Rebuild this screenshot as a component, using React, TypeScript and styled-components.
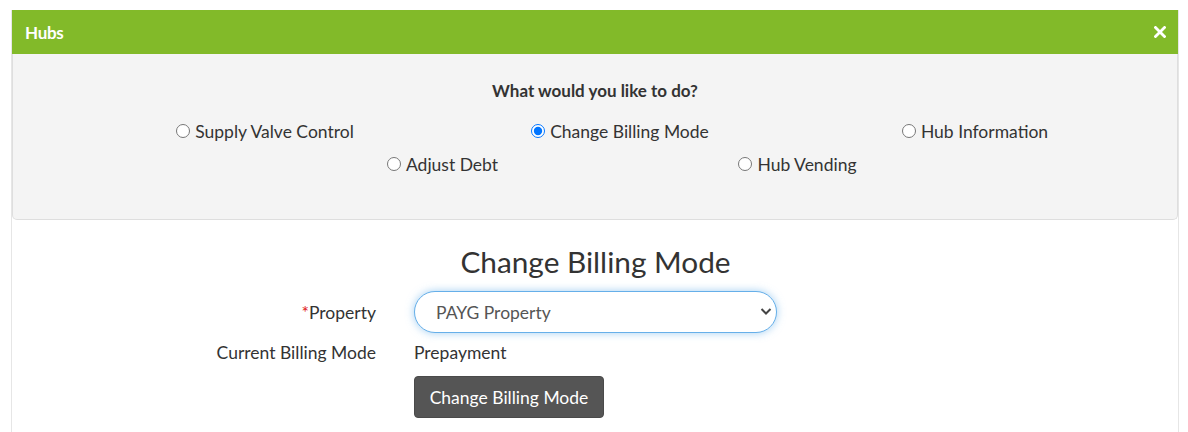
import React from "react";
import styled, { createGlobalStyle } from "styled-components";

const Global = createGlobalStyle`
  html, body { margin: 0; padding: 0; background: #ffffff; }
  body { font-family: Lato, "Open Sans", Arial, sans-serif; color: #333333; }
  * { box-sizing: border-box; }
`;

const Page = styled.div`
  padding: 10px 9px 0 11px;
  height: 432px;
  overflow: hidden;
`;

const Modal = styled.div`
  border-left: 1px solid #e6e6e6;
  border-right: 1px solid #e6e6e6;
  height: 422px;
  display: flex;
  flex-direction: column;
`;

const Header = styled.div`
  height: 44px;
  flex-shrink: 0;
  background: #82ba29;
  display: flex;
  align-items: center;
  justify-content: space-between;
  padding: 0 11px 0 13px;
`;

const Title = styled.h1`
  margin: 0;
  font-size: 17px;
  font-weight: 700;
  color: #ffffff;
  letter-spacing: -0.3px;
`;

const Close = styled.button`
  border: 0;
  background: transparent;
  padding: 0;
  width: 14px;
  height: 14px;
  display: flex;
  align-items: center;
  justify-content: center;
  cursor: pointer;
`;

const Chooser = styled.div`
  background: #f4f4f4;
  border: 1px solid #dedede;
  border-top: 0;
  border-radius: 0 0 5px 5px;
  height: 166px;
  flex-shrink: 0;
  padding-top: 27px;
`;

const Question = styled.div`
  text-align: center;
  font-size: 17px;
  font-weight: 700;
  line-height: 20px;
  color: #333;
  margin-bottom: 20px;
`;

const OptionRow = styled.div`
  display: flex;
  justify-content: center;
  padding-left: 50px;
  height: 33px;
`;

const OptionCell = styled.label`
  width: 355px;
  display: flex;
  justify-content: center;
  align-items: center;
  height: 20px;
  font-size: 17.5px;
  color: #333;
  cursor: pointer;
`;

const Radio = styled.input`
  margin: 0 5px 0 0;
  width: 14px;
  height: 14px;
  accent-color: #0075ff;
`;

const Form = styled.div`
  padding-top: 24px;
`;

const FormTitle = styled.h2`
  margin: 0 0 11px 0;
  text-align: center;
  font-size: 29.8px;
  font-weight: 400;
  line-height: 36px;
  color: #333;
  padding-left: 1px;
`;

const FieldRow = styled.div<{ $h: number; $mb: number }>`
  display: grid;
  grid-template-columns: 364px 363px;
  column-gap: 38px;
  align-items: center;
  height: ${(p) => p.$h}px;
  margin-bottom: ${(p) => p.$mb}px;
`;

const Label = styled.div`
  text-align: right;
  font-size: 17.5px;
  color: #333;
`;

const Req = styled.span`
  color: #e02020;
`;

const Value = styled.div`
  font-size: 17.5px;
  color: #333;
`;

const SelectWrap = styled.div`
  position: relative;
  height: 42px;
`;

const Select = styled.select`
  appearance: none;
  -webkit-appearance: none;
  width: 100%;
  height: 42px;
  border: 1px solid #66afe9;
  border-radius: 21px;
  background: #ffffff;
  box-shadow: 0 0 8px rgba(102, 175, 233, 0.6);
  padding: 0 30px 0 21px;
  font-family: Lato, "Open Sans", Arial, sans-serif;
  font-size: 17.5px;
  color: #555;
  outline: none;
`;

const Chevron = styled.svg`
  position: absolute;
  right: 5px;
  top: 16px;
  pointer-events: none;
`;

const Button = styled.button`
  width: 190px;
  height: 42px;
  background: #555555;
  border: 1px solid #4a4a4a;
  border-radius: 4px;
  color: #ffffff;
  font-family: Lato, "Open Sans", Arial, sans-serif;
  font-size: 17.5px;
  cursor: pointer;
`;

const Empty = styled.div``;

const row1 = [
  { label: "Supply Valve Control", checked: false },
  { label: "Change Billing Mode", checked: true },
  { label: "Hub Information", checked: false },
];
const row2 = [
  { label: "Adjust Debt", checked: false },
  { label: "Hub Vending", checked: false },
];

export default function App() {
  return (
    <>
      <Global />
      <Page>
        <Modal>
          <Header>
            <Title>Hubs</Title>
            <Close aria-label="Close">
              <svg width="12" height="12" viewBox="0 0 12 12">
                <path d="M1.5 1.5 L10.5 10.5 M10.5 1.5 L1.5 10.5" stroke="#ffffff" strokeWidth="2.8" strokeLinecap="square" />
              </svg>
            </Close>
          </Header>
          <Chooser>
            <Question>What would you like to do?</Question>
            {[row1, row2].map((row, i) => (
              <OptionRow key={i}>
                {row.map((o) => (
                  <OptionCell key={o.label}>
                    <Radio type="radio" name="action" defaultChecked={o.checked} />
                    {o.label}
                  </OptionCell>
                ))}
              </OptionRow>
            ))}
          </Chooser>
          <Form>
            <FormTitle>Change Billing Mode</FormTitle>
            <FieldRow $h={42} $mb={0}>
              <Label>
                <Req>*</Req>Property
              </Label>
              <SelectWrap>
                <Select defaultValue="payg">
                  <option value="payg">PAYG Property</option>
                </Select>
                <Chevron width="12" height="9" viewBox="0 0 12 9">
                  <path d="M1.5 2 L6 6.5 L10.5 2" stroke="#444" strokeWidth="2" fill="none" />
                </Chevron>
              </SelectWrap>
            </FieldRow>
            <FieldRow $h={38} $mb={5}>
              <Label>Current Billing Mode</Label>
              <Value>Prepayment</Value>
            </FieldRow>
            <FieldRow $h={42} $mb={0}>
              <Empty />
              <Empty>
                <Button>Change Billing Mode</Button>
              </Empty>
            </FieldRow>
          </Form>
        </Modal>
      </Page>
    </>
  );
}
